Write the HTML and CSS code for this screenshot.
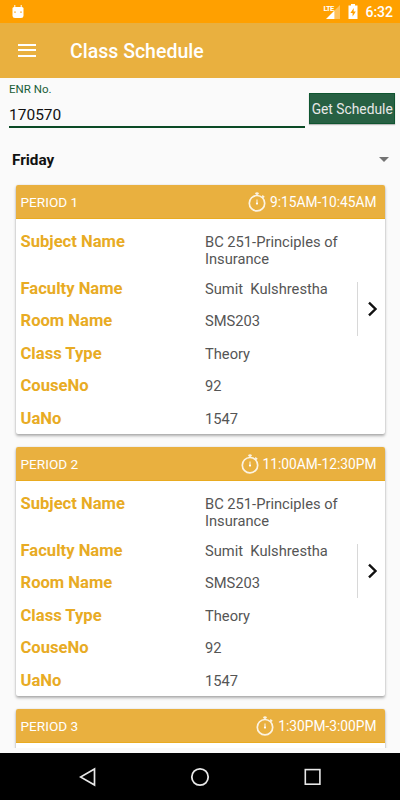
FILE: index.html
```html
<!DOCTYPE html>
<html lang="en">
<head>
    <meta charset="UTF-8">
    <meta name="viewport" content="width=device-width, initial-scale=1.0">
    <title>Class Schedule</title>
    <link rel="stylesheet" href="styles.css">
</head>
<body>
    <svg width="0" height="0" class="symbols">
        <symbol id="stopwatch" viewBox="0 0 18 20">
            <g fill="none" stroke="#fff" stroke-opacity="0.85">
                <circle cx="9" cy="11.2" r="7.7" stroke-width="1.7"/>
                <path d="M9 7.5v3.5" stroke-width="1.1"/>
                <path d="M9 0.3v3M7.2 1.6h3.6M14.2 3.6l2 1.8" stroke-width="1.5"/>
            </g>
            <circle cx="9" cy="11.6" r="1.1" fill="#fff"/>
        </symbol>
        <symbol id="chevron" viewBox="0 0 12 16">
            <path d="M2 1.7L8.5 8L2 14.3" fill="none" stroke="#111" stroke-width="2.4"/>
        </symbol>
    </svg>

    <div class="status-bar">
        <svg class="droid" width="12" height="14" viewBox="0 0 12 14">
            <path d="M2.8 0v3M9.2 0v3" stroke="#fff" stroke-width="1"/>
            <path d="M0.5 3.5Q0.5 2 2 2h8q1.5 0 1.5 1.5v7.2Q11.5 13 9 13H3Q0.5 13 0.5 10.7z" fill="#fff"/>
            <path d="M2.3 7.2h1.4M8.3 7.2h1.4" stroke="#ffa000" stroke-width="1.2"/>
        </svg>
        <div class="signal">
            <span class="lte">LTE</span>
            <svg width="14" height="14" viewBox="0 0 14 14">
                <path d="M14 0v14H8.5V5.5z" fill="#fff" fill-opacity="0.35"/>
                <path d="M8.5 5.5V14H0z" fill="#fff"/>
            </svg>
        </div>
        <svg class="battery" width="10" height="15" viewBox="0 0 10 15">
            <path d="M3 0h4v1.5h2.5V15h-9V1.5H3z" fill="#fff"/>
            <path d="M5.8 4L2.4 9h2.2v3.5L7.8 7.4H5.6z" fill="#ffa000"/>
        </svg>
        <span class="clock">6:32</span>
    </div>

    <div class="toolbar">
        <div class="menu-btn"><span></span><span></span><span></span></div>
        <h1 class="title">Class Schedule</h1>
    </div>

    <div class="search">
        <div class="field">
            <label class="field-label">ENR No.</label>
            <div class="field-value">170570</div>
        </div>
        <button class="get-btn">Get Schedule</button>
    </div>

    <div class="day-select">
        <span>Friday</span>
        <svg width="10" height="5" viewBox="0 0 10 5"><path d="M0 0h10L5 5z" fill="#737373"/></svg>
    </div>

    <div class="list">
        <div class="card">
            <div class="card-header">
                <span>PERIOD 1</span>
                <span class="time"><svg width="18" height="20"><use href="#stopwatch"/></svg>9:15AM-10:45AM</span>
            </div>
            <div class="card-body">
                <div class="rows">
                    <div class="row"><b>Subject Name</b><span>BC 251-Principles of Insurance</span></div>
                    <div class="row"><b>Faculty Name</b><span>Sumit  Kulshrestha</span></div>
                    <div class="row"><b>Room Name</b><span>SMS203</span></div>
                    <div class="row"><b>Class Type</b><span>Theory</span></div>
                    <div class="row"><b>CouseNo</b><span>92</span></div>
                    <div class="row"><b>UaNo</b><span>1547</span></div>
                </div>
                <div class="more"><svg width="12" height="16"><use href="#chevron"/></svg></div>
            </div>
        </div>

        <div class="card">
            <div class="card-header">
                <span>PERIOD 2</span>
                <span class="time"><svg width="18" height="20"><use href="#stopwatch"/></svg>11:00AM-12:30PM</span>
            </div>
            <div class="card-body">
                <div class="rows">
                    <div class="row"><b>Subject Name</b><span>BC 251-Principles of Insurance</span></div>
                    <div class="row"><b>Faculty Name</b><span>Sumit  Kulshrestha</span></div>
                    <div class="row"><b>Room Name</b><span>SMS203</span></div>
                    <div class="row"><b>Class Type</b><span>Theory</span></div>
                    <div class="row"><b>CouseNo</b><span>92</span></div>
                    <div class="row"><b>UaNo</b><span>1547</span></div>
                </div>
                <div class="more"><svg width="12" height="16"><use href="#chevron"/></svg></div>
            </div>
        </div>

        <div class="card">
            <div class="card-header">
                <span>PERIOD 3</span>
                <span class="time"><svg width="18" height="20"><use href="#stopwatch"/></svg>1:30PM-3:00PM</span>
            </div>
        </div>
    </div>

    <div class="nav-bar">
        <svg width="18" height="20" viewBox="0 0 18 20"><path d="M15.5 2v16L1.5 10z" fill="none" stroke="#e8e8e8" stroke-width="1.7"/></svg>
        <svg width="20" height="20" viewBox="0 0 20 20"><circle cx="10" cy="10" r="8.2" fill="none" stroke="#e8e8e8" stroke-width="1.8"/></svg>
        <svg width="18" height="18" viewBox="0 0 18 18"><rect x="2.3" y="1.6" width="14.6" height="14.6" fill="none" stroke="#e8e8e8" stroke-width="1.6"/></svg>
    </div>
</body>
</html>
```

FILE: styles.css
```css
* {
    box-sizing: border-box;
}

body {
    display: flex;
    flex-direction: column;
    width: 400px;
    height: 800px;
    margin: 0;
    overflow: hidden;
    background-color: #fafafa;
    font-family: Roboto, sans-serif;
    color: #111;
}

svg {
    display: block;
    flex: none;
}

.symbols {
    position: absolute;
}

.status-bar {
    display: flex;
    flex: none;
    align-items: center;
    height: 23px;
    padding: 1px 7px 0 12px;
    background-color: #ffa000;
    color: white;
}

.droid {
    margin-top: -1px;
    margin-right: auto;
}

.signal {
    display: flex;
    align-items: flex-start;
}

.lte {
    font-size: 7.5px;
    font-weight: 700;
    line-height: 7px;
    letter-spacing: -0.7px;
    margin-right: -7px;
}

.battery {
    margin: -1px 7px 0 8px;
}

.clock {
    font-size: 14px;
    font-weight: 500;
}

.toolbar {
    display: flex;
    flex: none;
    align-items: center;
    height: 55px;
    padding: 0 18px;
    background-color: #e9b03f;
    color: white;
}

.menu-btn {
    display: flex;
    flex-direction: column;
    gap: 3.5px;
    width: 18px;
    margin-top: -1px;
    margin-right: 34px;
}

.menu-btn span {
    height: 2px;
    background-color: white;
}

.title {
    margin: 2px 0 0;
    font-size: 19.5px;
    font-weight: 500;
}

.search {
    display: flex;
    flex: none;
    height: 50px;
    padding: 0 5px 0 9px;
}

.field {
    width: 296.4px;
    border-bottom: 2px solid #0b4a26;
}

.field-label {
    display: block;
    padding-top: 4px;
    font-size: 11.5px;
    line-height: 14px;
    color: #1b5e38;
}

.field-value {
    margin-top: 10px;
    font-size: 15.5px;
    line-height: 18px;
}

.get-btn {
    width: 85.6px;
    height: 31px;
    margin: 15px 0 0 4px;
    padding: 0;
    border: 1px solid #0f5530;
    background-color: #276043;
    box-shadow: 0 1px 1px rgba(0, 0, 0, 0.25);
    color: #e8e8e8;
    font-family: inherit;
    font-size: 13.8px;
    white-space: nowrap;
}

.day-select {
    display: flex;
    flex: none;
    align-items: center;
    justify-content: space-between;
    height: 50px;
    padding: 14px 11px 0 12px;
    font-size: 15.3px;
    font-weight: 700;
}

.day-select svg {
    margin-top: -2px;
}

.list {
    height: 570px;
    flex: none;
    padding: 7px 15.5px 0 15.5px;
    overflow: hidden;
}

.card {
    height: 249px;
    margin-bottom: 13px;
    border-radius: 2px;
    background-color: white;
    box-shadow: 0 2px 3px rgba(0, 0, 0, 0.3), 0 0 2px rgba(0, 0, 0, 0.12);
    overflow: hidden;
}

.card-header {
    display: flex;
    align-items: center;
    justify-content: space-between;
    height: 34px;
    padding: 1px 8px 0 5px;
    background-color: #e9b03f;
    border-bottom: 1px solid #e9ab20;
    color: white;
    font-size: 13.6px;
}

.time {
    display: flex;
    align-items: center;
    gap: 4px;
    font-size: 13.75px;
}

.card-body {
    display: flex;
}

.rows {
    width: 341.5px;
    padding: 14.7px 0 0 5px;
}

.row {
    display: flex;
    min-height: 32.4px;
    padding-bottom: 12px;
    font-size: 14.7px;
    line-height: 17.3px;
}

.row:first-child {
    min-height: 47.4px;
}

.row b {
    width: 184.5px;
    font-size: 16.6px;
    font-weight: 700;
    line-height: 16.5px;
    color: #e8ab24;
}

.row span {
    width: 150px;
    color: #555;
    white-space: pre-wrap;
}

.more {
    display: flex;
    align-items: center;
    height: 54px;
    margin-top: 63px;
    padding-left: 9px;
    border-left: 1px solid #d8d8d8;
}

.nav-bar {
    display: flex;
    flex: none;
    align-items: center;
    justify-content: space-between;
    height: 47px;
    margin-top: 5px;
    padding: 0 79px 0 79px;
    background-color: black;
}
```
